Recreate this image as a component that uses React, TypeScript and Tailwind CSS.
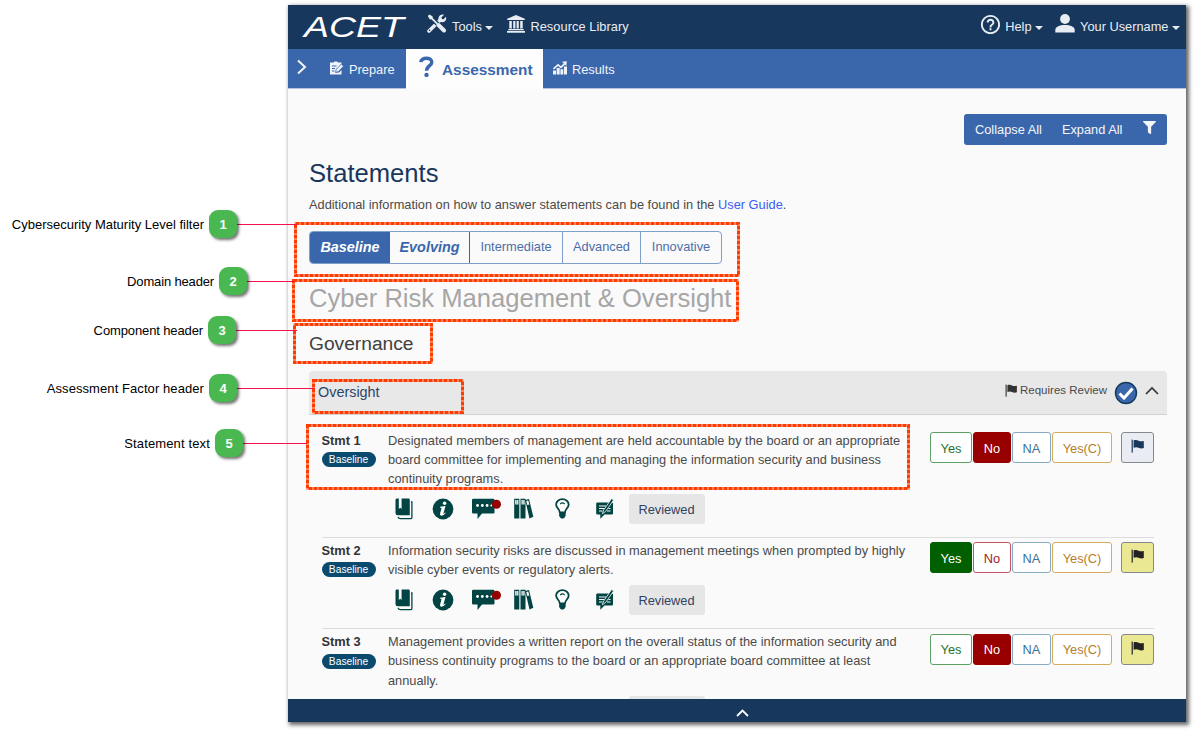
import React from "react";
import { FaFilter } from "react-icons/fa";
import { MdHelpOutline } from "react-icons/md";

const teal = "#024443";

function Caret() {
  return <span className="ml-[3.500px] mt-px inline-block border-x-[4px] border-t-[4px] border-x-transparent border-t-[#e8edf3]" />;
}

function ToolsIcon({ className }: { className: string }) {
  return (
    <svg className={className} width="20" height="19" viewBox="0 0 20 19">
      <path d="M2 17 13.500 5.800" stroke="#e8edf3" strokeWidth="3.600" strokeLinecap="round" />
      <path d="M17 .8 14.300 3.400 14.800 5 16.500 5.300 19 2.800C19.800 5.500 18.300 8.300 15.300 8.300 12.300 8.300 11 5.800 11.600 3.600 12.300 1.300 14.500.1 17 .8Z" fill="#e8edf3" />
      <circle cx="2.500" cy="16.300" r=".8" fill="#18375d" />
      <path d="M4 3.500 17 16.500" stroke="#18375d" strokeWidth="4.500" />
      <path d="M.8 2 2.300.5 5.500 2.300 5.900 4.200 11 9.300 9.700 10.600 4.600 5.500 2.700 5.200Z" fill="#e8edf3" />
      <path d="M11.500 11 17 16.500" stroke="#e8edf3" strokeWidth="4" strokeLinecap="round" />
    </svg>
  );
}

function BankIcon({ className }: { className: string }) {
  return (
    <svg className={className} width="18" height="18" viewBox="0 0 18 18" fill="#e8edf3">
      <path d="M9 0 17.800 3.800V5H.2V3.800ZM2.300 6H4.800V13.500H2.300ZM6.200 6H8.400V13.500H6.200ZM9.600 6H11.800V13.500H9.600ZM13.200 6H15.700V13.500H13.200ZM1.300 14H16.700V15.300H1.300ZM0 16H18V17.700H0Z" />
    </svg>
  );
}

function PersonIcon({ className }: { className: string }) {
  return (
    <svg className={className} width="20" height="19" viewBox="0 0 20 19" fill="#e8edf3">
      <ellipse cx="10" cy="5" rx="4.900" ry="5" />
      <path d="M.3 18.500V16C.3 12.600 4.800 11 10 11S19.700 12.600 19.700 16V18.500Z" />
    </svg>
  );
}

function Flag({ color, size = 14 }: { color: string; size?: number }) {
  return (
    <svg width={size} height={size} viewBox="0 0 14 14" fill={color}>
      <rect x="0.600" y="0.600" width="1.200" height="13" />
      <path d="M2.600 1.400C4.600.6 6 .9 7.600 1.700c1.800.9 3.400.6 5.200.2V9c-1.900.7-3.600.5-5.300-.3C5.900 7.900 4.500 8 2.600 8.700Z" />
    </svg>
  );
}

function Chevron({ className, d, w, h, sw = 2 }: { className: string; d: string; w: number; h: number; sw?: number }) {
  return (
    <svg className={className} width={w} height={h} viewBox={`0 0 ${w} ${h}`} fill="none" stroke="currentColor" strokeWidth={sw}>
      <path d={d} />
    </svg>
  );
}

function BookIcon() {
  return (
    <svg width="18" height="22" viewBox="0 0 18 22">
      <path d="M2 .6H3.800V11L5.200 9.800 6.600 11V.6H13.500Q14.800.6 14.800 2V17.200H3Q.5 17.200.5 14.700V2Q.5.6 2 .6Z" fill={teal} />
      <path d="M3 18.900Q3.500 20.700 5.500 20.700H15.600Q16.900 20.700 16.900 19.400V4H16" fill="none" stroke={teal} strokeWidth="1.300" />
    </svg>
  );
}

function InfoIcon() {
  return (
    <svg width="22" height="22" viewBox="0 0 22 22">
      <circle cx="11" cy="11" r="10.400" fill={teal} />
      <circle cx="12.600" cy="5.200" r="1.700" fill="#fff" />
      <path d="M8 8.700 13.500 8 11.500 15.300Q11.300 16.200 12.100 15.600L13.300 14.500 13.700 14.900Q11.600 17.700 9.500 17.700 7.500 17.600 8.100 15.400L9.500 10.200Q9.500 9.500 8 9.500Z" fill="#fff" />
    </svg>
  );
}

function CommentIcon() {
  return (
    <svg width="30" height="22" viewBox="0 0 30 22">
      <path d="M1.200.7H21.300Q22.500.7 22.500 2V14.200Q22.500 15.500 21.300 15.500H10L5.500 21V15.500H1.200Q0 15.500 0 14.200V2Q0 .7 1.200.7Z" fill={teal} />
      <circle cx="5.500" cy="7.500" r="1.400" fill="#fff" />
      <circle cx="10.300" cy="7.500" r="1.400" fill="#fff" />
      <circle cx="15.100" cy="7.500" r="1.400" fill="#fff" />
      <circle cx="19.300" cy="7.500" r="1" fill="#fff" />
      <circle cx="24.500" cy="6.200" r="4.500" fill="#980000" />
    </svg>
  );
}

function BooksIcon() {
  return (
    <svg width="20" height="22" viewBox="0 0 20 22">
      <path d="M.2.800H5.300V20.500H.2ZM6.500.800H11.500V20.500H6.500ZM11.200 1.900 15 .9 19.300 18.800 15.500 20.500Z" fill={teal} />
      <path d="M1.200 2H4.400V6.600H1.200ZM7.500 2H10.600V6.600H7.500ZM12.300 2.900 14.300 2.400 15.300 6.400 13.300 7Z" fill="#fff" />
      <path d="M2.800 2V6.600M9 2V6.600" stroke={teal} strokeWidth=".5" />
    </svg>
  );
}

function BulbIcon() {
  return (
    <svg width="16" height="22" viewBox="0 0 16 22" fill="none" stroke={teal}>
      <path d="M4.800 14.500C4.800 11 1.100 10 1.100 6.600A6.300 5.400 0 0 1 13.700 6.600C13.700 10 10 11 10 14.500Z" strokeWidth="1.800" />
      <path d="M5.200 5.900Q7.400 3.900 9.600 5.900" strokeWidth="1.300" />
      <path d="M4.700 15.500H10.100V18L8.700 20H6.100L4.700 18Z" fill={teal} strokeWidth="1" />
    </svg>
  );
}

function NoteIcon() {
  return (
    <svg width="20" height="22" viewBox="0 0 20 22">
      <path d="M1.300 4.500H15.900Q17 4.500 17 5.500V15.500Q17 16.500 15.900 16.500H8.500L4.300 20.800V16.500H1.300Q.2 16.500.2 15.500V5.500Q.2 4.500 1.300 4.500Z" fill={teal} />
      <path d="M3 8H10M3 10.500H8.500M3 13H6.500M12.500 10.500H14.500M11 13H14.500" stroke="#fafafa" strokeWidth="1" />
      <path d="M6.300 15.800 7.700 12 15.600.5 17.600 2 9.600 13.500Z" fill={teal} stroke="#fafafa" strokeWidth=".8" />
    </svg>
  );
}

function Answer({ label, look, w }: { label: string; look: string; w: string }) {
  return <button className={`flex h-[31px] items-center justify-center rounded-[3px] border pt-px ${w} ${look}`}>{label}</button>;
}

type Stmt = { n: number; h: string; lines: string[]; yes: boolean; flagged: boolean };

const statements: Stmt[] = [
  {
    n: 1,
    h: "h-[110.400px]",
    lines: [
      "Designated members of management are held accountable by the board or an appropriate",
      "board committee for implementing and managing the information security and business",
      "continuity programs.",
    ],
    yes: false,
    flagged: false,
  },
  {
    n: 2,
    h: "h-[91.200px]",
    lines: [
      "Information security risks are discussed in management meetings when prompted by highly",
      "visible cyber events or regulatory alerts.",
    ],
    yes: true,
    flagged: true,
  },
  {
    n: 3,
    h: "h-[110.400px]",
    lines: [
      "Management provides a written report on the overall status of the information security and",
      "business continuity programs to the board or an appropriate board committee at least",
      "annually.",
    ],
    yes: false,
    flagged: true,
  },
];

function Statement({ s, clipped }: { s: Stmt; clipped: boolean }) {
  return (
    <div className={`flex shrink-0 border-t ${s.n === 1 ? "border-transparent" : "border-[#dcdcdc]"} ${s.h}`}>
      <div className="w-[66.500px] shrink-0 pt-[3px]">
        <div className="font-bold leading-[19px] text-[#333]">Stmt {s.n}</div>
        <div className="mt-[2.500px] flex h-[15px] w-[54px] items-center justify-center rounded-full bg-[#0b4a6f] text-[10.240px] text-white">Baseline</div>
      </div>
      <div className="w-[542px] shrink-0 pt-[3px]">
        {s.lines.map((l) => (
          <div key={l} className="whitespace-nowrap leading-[19.200px]">{l}</div>
        ))}
        {clipped ? (
          <div className="ml-[240.500px] mt-[6px] h-[30px] w-[76px] rounded-[3px] bg-[#e6e6e6]" />
        ) : (
          <div className="mt-[6px] flex h-[30px] items-center pl-[7px]">
            <div className="w-[36.500px]"><BookIcon /></div>
            <div className="w-[40px]"><InfoIcon /></div>
            <div className="w-[42px]"><CommentIcon /></div>
            <div className="w-[41px]"><BooksIcon /></div>
            <div className="w-[41.500px]"><BulbIcon /></div>
            <div className="w-[32.500px]"><NoteIcon /></div>
            <div className="flex h-[30px] w-[76px] items-center justify-center rounded-[3px] bg-[#e6e6e6] text-[#30425f]">Reviewed</div>
          </div>
        )}
      </div>
      <div className="flex gap-px pt-[4.500px]">
        <Answer label="Yes" w="w-[42px]" look={s.yes ? "border-[#006000] bg-[#006000] text-white" : "border-[#5ba162] bg-white text-[#26742c]"} />
        <Answer label="No" w="w-[38px]" look={s.yes ? "border-[#c45560] bg-white text-[#a11d25]" : "border-[#980000] bg-[#980000] text-white"} />
        <Answer label="NA" w="w-[39px]" look="border-[#86abc4] bg-white text-[#3b7399]" />
        <Answer label="Yes(C)" w="w-[60px]" look="border-[#d5ab5c] bg-white text-[#b57d2c]" />
        <button className={`ml-2 flex h-[31px] w-[33px] items-start justify-center rounded-[3px] border border-[#85888c] pt-[6px] ${s.flagged ? "bg-[#ebe893]" : "bg-[#e9edf3]"}`}>
          <Flag color={s.flagged ? "#222" : "#18375d"} />
        </button>
      </div>
    </div>
  );
}

type Box = { x: number; y: number; r: number; b: number };
const boxes: Box[] = [
  { x: 294, y: 222, r: 740, b: 277 },
  { x: 292, y: 279, r: 739, b: 322 },
  { x: 293, y: 323, r: 433, b: 364 },
  { x: 312, y: 379, r: 464, b: 414 },
  { x: 306, y: 424, r: 910, b: 490 },
];

type Call = { n: number; text: string; track: string; cx: number; cy: number; end: number };
const calls: Call[] = [
  { n: 1, text: "Cybersecurity Maturity Level filter", track: "tracking-normal", cx: 223, cy: 224, end: 297 },
  { n: 2, text: "Domain header", track: "tracking-[-0.15px]", cx: 233, cy: 281, end: 294 },
  { n: 3, text: "Component header", track: "tracking-[-0.12px]", cx: 222, cy: 330, end: 297 },
  { n: 4, text: "Assessment Factor header", track: "tracking-[0.08px]", cx: 223, cy: 388, end: 315 },
  { n: 5, text: "Statement text", track: "tracking-[0.14px]", cx: 229, cy: 443, end: 307 },
];

function Annotations() {
  return (
    <>
      <svg className="pointer-events-none absolute left-0 top-0" width="1195" height="731" fill="none">
        {boxes.map((b) => (
          <g key={b.y} strokeWidth="3">
            <rect x={b.x + 1.5} y={b.y + 1.5} width={b.r - b.x - 3} height={b.b - b.y - 3} stroke="#ffc4b3" />
            <rect x={b.x + 1.5} y={b.y + 1.5} width={b.r - b.x - 3} height={b.b - b.y - 3} stroke="#ff3c00" strokeDasharray="4 1" />
          </g>
        ))}
        {calls.map((c) => (
          <path key={c.n} d={`M${c.cx + 14} ${c.cy + 0.5}H${c.end}`} stroke="#f5114c" strokeWidth="1" />
        ))}
      </svg>
      {calls.map((c) => (
        <div
          key={c.n}
          className="absolute left-0 flex h-7 items-center justify-end gap-[5px] text-[13px] text-black"
          style={{ top: c.cy - 14, width: c.cx + 14 }}
        >
          <span className={`whitespace-nowrap pt-[2px] ${c.track}`}>{c.text}</span>
          <span className="flex h-7 w-7 items-center justify-center rounded-[9px] bg-[#4ab851] pt-px font-bold text-white shadow-[2px_2px_3px_rgba(0,0,0,0.55)]">{c.n}</span>
        </div>
      ))}
    </>
  );
}

export default function App() {
  return (
    <div className="relative h-[731px] w-[1195px] overflow-hidden bg-white pl-[288px] pt-[5px] font-['Liberation_Sans',Arial,sans-serif] text-[12.800px] text-[#4a4a4a]">
      <div className="flex h-[717px] w-[898px] flex-col bg-[#fafafa] shadow-[2px_2px_4px_1px_rgba(0,0,0,0.6)]">
        <header className="flex h-11 shrink-0 items-center bg-[#18375d] text-[#e8edf3]">
          <svg className="ml-[11px] shrink-0 overflow-visible" width="113" height="36" viewBox="0 0 113 36">
            <text x="5" y="27.500" fontSize="29" fontStyle="italic" fill="#fff" textLength="100" lengthAdjust="spacingAndGlyphs">ACET</text>
          </svg>
          <ToolsIcon className="ml-[15px] mb-[7px]" />
          <span className="ml-[5px]">Tools</span>
          <Caret />
          <BankIcon className="ml-[14px] mb-[6px]" />
          <span className="ml-[5px] tracking-[0.06px]">Resource Library</span>
          <MdHelpOutline className="ml-auto mb-[6px] text-[23px]" />
          <span className="ml-[3px]">Help</span>
          <Caret />
          <PersonIcon className="ml-[12px] mb-[7px]" />
          <span className="ml-[5px]">Your Username</span>
          <Caret />
          <span className="w-[6px]" />
        </header>
        <nav className="flex h-10 shrink-0 items-stretch border-b border-[#b3c3df] bg-[#3a67ab] text-[#f0f4fa]">
          <div className="flex w-[118px] items-center">
            <Chevron className="mb-1 ml-[8px]" d="M2 1.500 9 8 2 14.500" w={12} h={16} />
            <svg className="ml-[22px] mb-px" width="14" height="15" viewBox="0 0 14 15">
              <path d="M0 1.500H3.500L4.500.5H7L8 1.500H11.500V3.500L6 8.800V11.500H9L11.500 9V13.500H0Z" fill="#f0f4fa" />
              <path d="M2 5H6.500M2 7.500H5M2 10H4.500" stroke="#3a67ab" strokeWidth="1" />
              <path d="M5.500 11.500 6.300 8.300 11.300 3 13.500 5.200 8.500 10.500Z" fill="#f0f4fa" stroke="#3a67ab" strokeWidth=".8" />
            </svg>
            <span className="ml-[5px] mt-[2px]">Prepare</span>
          </div>
          <div className="-mb-px flex w-[137px] items-center bg-[#fdfdfd] text-[#3a67ab]">
            <svg className="ml-[12px] mb-1" width="17" height="22" viewBox="0 0 17 22">
              <path d="M2.800 6.200C3.200 1 13.800.7 13.800 6.200 13.800 9.800 8.600 9.700 8.600 14.800" fill="none" stroke="#3a67ab" strokeWidth="3.400" />
              <circle cx="8.500" cy="18.900" r="2.200" fill="#3a67ab" />
            </svg>
            <span className="ml-[7px] mt-px text-[15.360px] font-bold">Assessment</span>
          </div>
          <div className="flex items-center pl-[10px]">
            <svg className="mb-[2px]" width="15" height="14" viewBox="0 0 15 14" fill="#f0f4fa">
              <path d="M0 9.500H3V13.500H0ZM3.700 7H6.700V13.500H3.700ZM7.400 8.300H10.300V13.500H7.400ZM11 5.500H14V13.500H11Z" />
              <path d="M.5 8 5 3.800 8 6.300 12 2.300" fill="none" stroke="#f0f4fa" strokeWidth="1.700" />
              <path d="M9 .8 13.800.3 13.300 5Z" />
            </svg>
            <span className="ml-[4px] mt-[2px]">Results</span>
          </div>
        </nav>
        <main className="flex min-h-0 flex-1 flex-col overflow-hidden pl-[21px] pr-[19px]">
          <div className="mt-[25px] flex h-[31px] w-[203px] shrink-0 items-center self-end rounded-[3px] bg-[#3a67ab] text-[#f3f6fb]">
            <span className="ml-[11px]">Collapse All</span>
            <span className="ml-[20px]">Expand All</span>
            <FaFilter className="ml-[21px] mb-1 text-[13px]" />
          </div>
          <h1 className="mt-[12px] h-8 shrink-0 text-[25.600px] leading-8 text-[#18375d]">Statements</h1>
          <p className="mt-[6px] h-5 shrink-0 leading-5">
            Additional information on how to answer statements can be found in the <a className="text-[#3a5cf5]">User Guide</a>.
          </p>
          <div className="mt-[16px] flex h-[33px] w-[413px] shrink-0 overflow-hidden rounded-[4px] border border-[#7f9fcb] text-[#4c6ea9]">
            <div className="flex w-[80px] items-center justify-center bg-[#3a67ab] text-[14.400px] font-bold italic text-white">Baseline</div>
            <div className="flex w-[80px] items-center justify-center border-r border-[#3a67ab] text-[14.400px] font-bold italic text-[#3a67ab]">Evolving</div>
            <div className="flex w-[93px] items-center justify-center border-r border-[#7f9fcb] pb-[2px]">Intermediate</div>
            <div className="flex w-[78px] items-center justify-center border-r border-[#7f9fcb] pb-[2px]">Advanced</div>
            <div className="flex flex-1 items-center justify-center pb-[2px]">Innovative</div>
          </div>
          <h2 className="mt-[18px] h-8 shrink-0 whitespace-nowrap text-[25.600px] leading-8 text-[#a6a6a6]">Cyber Risk Management &amp; Oversight</h2>
          <h3 className="mt-[18px] h-6 shrink-0 text-[19.200px] leading-6 text-[#404040]">Governance</h3>
          <div className="mt-[15px] flex h-11 shrink-0 items-center rounded-t-[4px] border-b border-[#d2d2d2] bg-[#e8e8e8] pl-[9px] pr-[8px]">
            <span className="mt-px text-[14.400px] text-[#2c4568]">Oversight</span>
            <div className="ml-auto mb-1"><Flag color="#333" size={13} /></div>
            <span className="ml-[2px] mb-[3px] text-[11.520px]">Requires Review</span>
            <svg className="ml-[7px]" width="24" height="24" viewBox="0 0 24 24">
              <circle cx="12" cy="12" r="10.500" fill="#3a67ab" stroke="#123c5c" strokeWidth="1.400" />
              <path d="M5.500 12.500 10 17 18.500 7.500" fill="none" stroke="#fff" strokeWidth="3" />
            </svg>
            <Chevron className="ml-[7px] mb-1 text-[#333]" d="M1 9 7 3 13 9" w={14} h={11} sw={1.6} />
          </div>
          <div className="mt-[11.600px] flex flex-col pl-[12.500px] pr-[13px]">
            {statements.map((s) => (
              <Statement key={s.n} s={s} clipped={s.n === 3} />
            ))}
          </div>
        </main>
        <footer className="flex h-[23px] shrink-0 items-center justify-center bg-[#18375d] text-white">
          <Chevron className="ml-[10px] mt-1" d="M1 8 6.500 2.500 12 8" w={13} h={10} sw={1.8} />
        </footer>
      </div>
      <Annotations />
    </div>
  );
}
